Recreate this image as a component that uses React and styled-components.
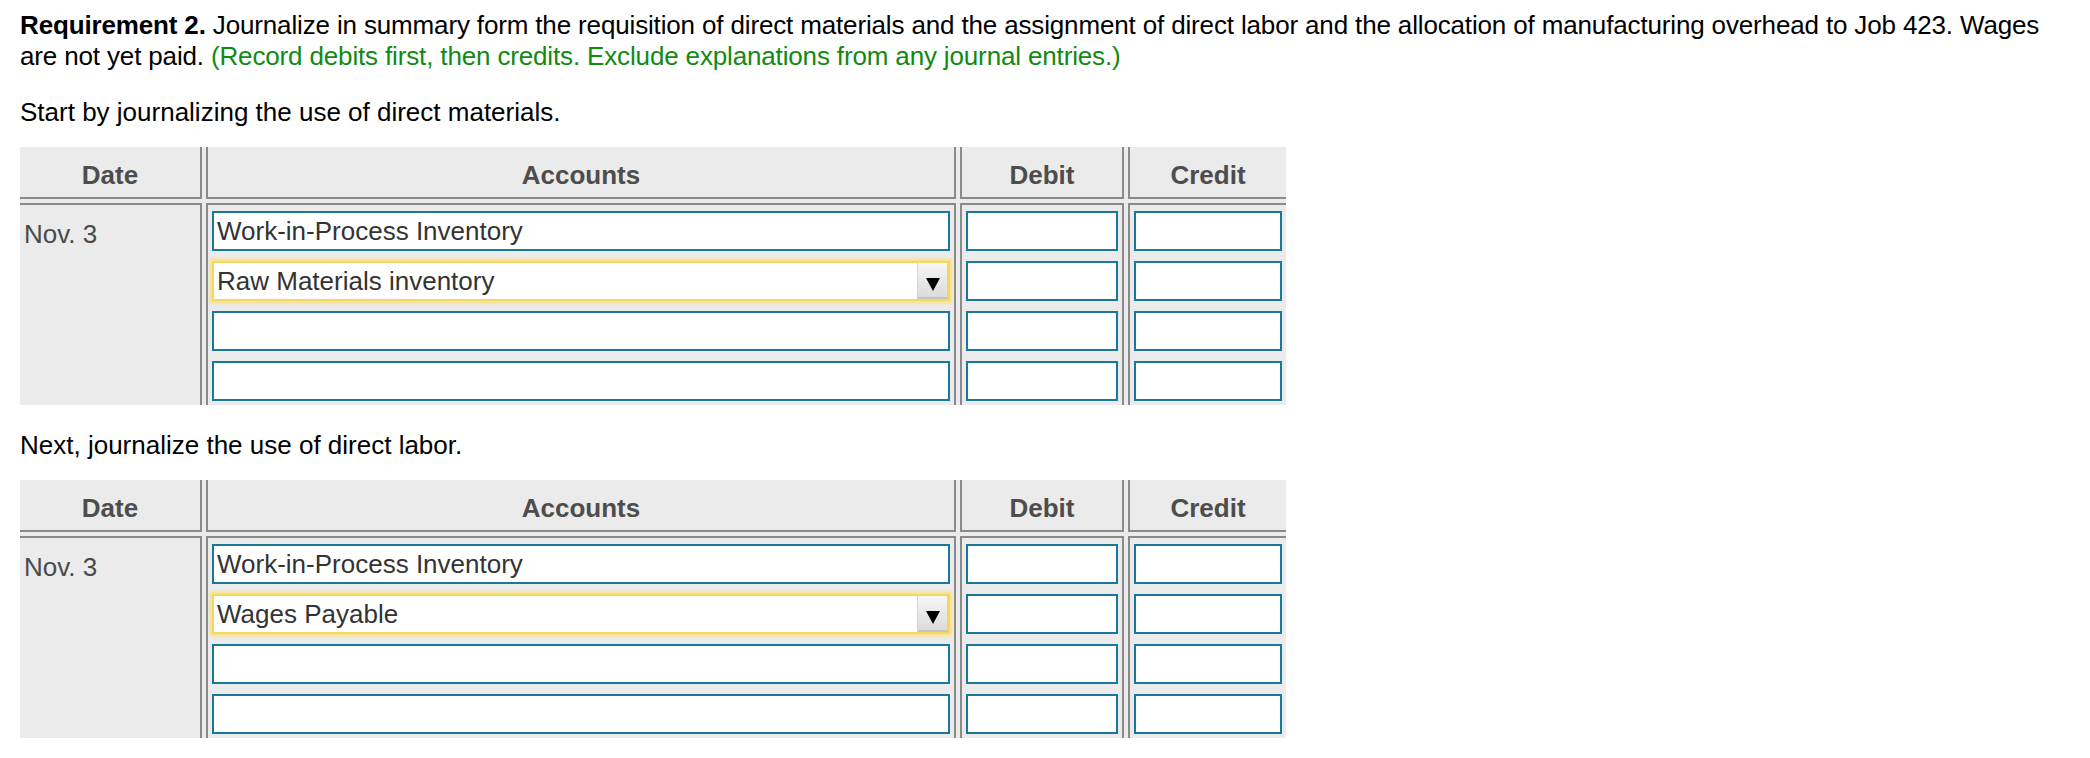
import React from 'react';
import styled, { createGlobalStyle } from 'styled-components';

const lineColor = '#8a8a8a';
const fieldBorder = '#17789a';

const GlobalStyle = createGlobalStyle`
  html, body {
    margin: 0;
    padding: 0;
    background: #ffffff;
  }
  body {
    font-family: "Liberation Sans", Arial, Helvetica, sans-serif;
    font-size: 26px;
    color: #000000;
  }
`;

const Page = styled.div`
  padding: 10px 20px 0 20px;
`;

const Paragraph = styled.p`
  margin: 0;
  line-height: 31px;
  letter-spacing: -0.15px;
`;

const Prompt = styled.p`
  margin: 25px 0 19px;
  line-height: 31px;
`;

const Hint = styled.span`
  color: #118a11;
`;

const Table = styled.div`
  display: grid;
  grid-template-columns: 182px 750px 164px 158px;
  column-gap: 4px;
  row-gap: 4px;
  width: 1266px;
  background: #ebebeb;
`;

const HeadCell = styled.div`
  height: 52px;
  padding-top: 13px;
  box-sizing: border-box;
  line-height: 31px;
  text-align: center;
  font-weight: bold;
  color: #4d4d4d;
  border-bottom: 2px solid ${lineColor};
  border-left: ${(p) => (p.$left ? `2px solid ${lineColor}` : 'none')};
  border-right: ${(p) => (p.$right ? `2px solid ${lineColor}` : 'none')};
`;

const BodyCell = styled.div`
  display: flex;
  flex-direction: column;
  gap: 10px;
  padding: 6px 4px 4px;
  border-top: 2px solid ${lineColor};
  border-left: ${(p) => (p.$left ? `2px solid ${lineColor}` : 'none')};
  border-right: ${(p) => (p.$right ? `2px solid ${lineColor}` : 'none')};
`;

const DateCell = styled.div`
  padding: 14px 4px 0 4px;
  line-height: 31px;
  color: #4a4a4a;
  border-top: 2px solid ${lineColor};
  border-right: 2px solid ${lineColor};
`;

const Field = styled.input`
  display: block;
  box-sizing: border-box;
  width: 100%;
  height: 40px;
  margin: 0;
  padding: 0 3px;
  border: 2px solid ${fieldBorder};
  border-radius: 0;
  background: #ffffff;
  font-family: "Liberation Sans", Arial, Helvetica, sans-serif;
  font-size: 26px;
  color: #333333;
  outline: none;
`;

const SelectBox = styled.div`
  display: flex;
  align-items: stretch;
  box-sizing: border-box;
  height: 40px;
  border: 2px solid #f6d95c;
  box-shadow: 0 0 3px 2px rgba(255, 222, 92, 0.75);
  background: #ffffff;
`;

const SelectText = styled.span`
  flex: 1;
  padding: 0 3px;
  line-height: 36px;
  color: #333333;
`;

const ArrowButton = styled.span`
  display: flex;
  align-items: flex-start;
  justify-content: center;
  width: 31px;
  padding-top: 15px;
  box-sizing: border-box;
  background: linear-gradient(#f6f6f6, #dadada);
  border-left: 1px solid #d4d4d4;
  box-shadow: inset 0 -2px 0 #c4c4c4, inset -1px 0 0 #cfcfcf;
`;

const Triangle = styled.span`
  width: 0;
  height: 0;
  border-left: 7px solid transparent;
  border-right: 7px solid transparent;
  border-top: 13px solid #000000;
`;

const AccountSelect = ({ value }) => (
  <SelectBox>
    <SelectText>{value}</SelectText>
    <ArrowButton>
      <Triangle />
    </ArrowButton>
  </SelectBox>
);

const blanks = [0, 1, 2, 3];

const Journal = ({ debitAccount, creditAccount }) => (
  <Table>
    <HeadCell $right>Date</HeadCell>
    <HeadCell $left $right>Accounts</HeadCell>
    <HeadCell $left $right>Debit</HeadCell>
    <HeadCell $left>Credit</HeadCell>

    <DateCell>Nov. 3</DateCell>
    <BodyCell $left $right>
      <Field defaultValue={debitAccount} />
      <AccountSelect value={creditAccount} />
      <Field />
      <Field />
    </BodyCell>
    <BodyCell $left $right>
      {blanks.map((i) => <Field key={i} />)}
    </BodyCell>
    <BodyCell $left>
      {blanks.map((i) => <Field key={i} />)}
    </BodyCell>
  </Table>
);

export default function App() {
  return (
    <>
      <GlobalStyle />
      <Page>
        <Paragraph>
          <b>Requirement 2.</b> Journalize in summary form the requisition of direct materials and the
          assignment of direct labor and the allocation of manufacturing overhead to Job 423. Wages
          are not yet paid.{' '}
          <Hint>(Record debits first, then credits. Exclude explanations from any journal entries.)</Hint>
        </Paragraph>
        <Prompt>Start by journalizing the use of direct materials.</Prompt>
        <Journal debitAccount="Work-in-Process Inventory" creditAccount="Raw Materials inventory" />
        <Prompt>Next, journalize the use of direct labor.</Prompt>
        <Journal debitAccount="Work-in-Process Inventory" creditAccount="Wages Payable" />
      </Page>
    </>
  );
}
